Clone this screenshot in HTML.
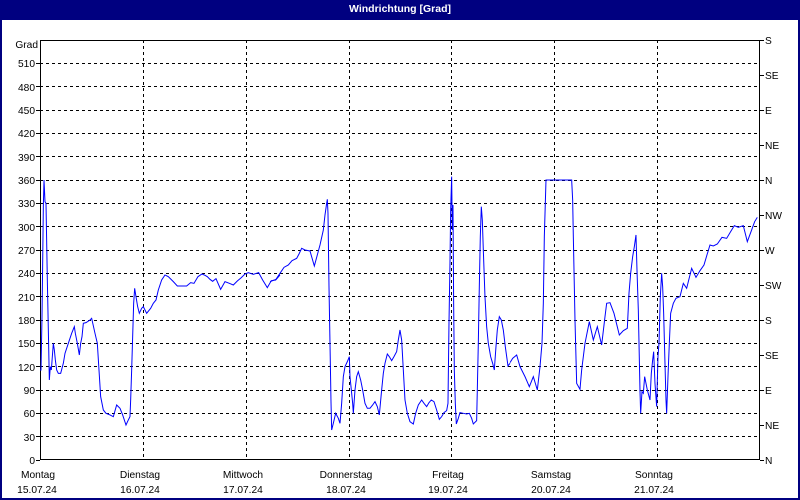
<!DOCTYPE html>
<html><head><meta charset="utf-8"><style>
html,body{margin:0;padding:0}
body{width:800px;height:500px;position:relative;background:#fff;font-family:Tahoma,"Liberation Sans",sans-serif;font-size:11px;color:#000;overflow:hidden}
.frame{position:absolute;left:0;top:0;width:796px;height:496px;border:2px solid #000080}
.title{position:absolute;left:0;top:0;width:800px;height:20px;background:#000080;color:#fff;font-weight:bold;text-align:center;line-height:18px;font-size:10.5px}
svg{position:absolute;left:0;top:0}
</style></head><body>
<div class="frame"></div>
<div class="title">Windrichtung [Grad]</div>
<svg width="800" height="500" font-family="Tahoma, 'Liberation Sans', sans-serif" font-size="10.2">
<g stroke="#000" stroke-width="1" stroke-dasharray="3,3" shape-rendering="crispEdges">
<line x1="40" x2="760" y1="436.5" y2="436.5"/><line x1="40" x2="760" y1="413.5" y2="413.5"/><line x1="40" x2="760" y1="390.5" y2="390.5"/><line x1="40" x2="760" y1="366.5" y2="366.5"/><line x1="40" x2="760" y1="343.5" y2="343.5"/><line x1="40" x2="760" y1="320.5" y2="320.5"/><line x1="40" x2="760" y1="296.5" y2="296.5"/><line x1="40" x2="760" y1="273.5" y2="273.5"/><line x1="40" x2="760" y1="250.5" y2="250.5"/><line x1="40" x2="760" y1="226.5" y2="226.5"/><line x1="40" x2="760" y1="203.5" y2="203.5"/><line x1="40" x2="760" y1="180.5" y2="180.5"/><line x1="40" x2="760" y1="156.5" y2="156.5"/><line x1="40" x2="760" y1="133.5" y2="133.5"/><line x1="40" x2="760" y1="110.5" y2="110.5"/><line x1="40" x2="760" y1="86.5" y2="86.5"/><line x1="40" x2="760" y1="63.5" y2="63.5"/>
<line y1="40" y2="460" x1="143.5" x2="143.5"/><line y1="40" y2="460" x1="246.5" x2="246.5"/><line y1="40" y2="460" x1="349.5" x2="349.5"/><line y1="40" y2="460" x1="451.5" x2="451.5"/><line y1="40" y2="460" x1="554.5" x2="554.5"/><line y1="40" y2="460" x1="657.5" x2="657.5"/>
</g>
<g stroke="#000" stroke-width="1" fill="none" shape-rendering="crispEdges">
<rect x="40.5" y="40.5" width="719" height="419"/>
<path d="M36 460.5h4M36 436.5h4M36 413.5h4M36 390.5h4M36 366.5h4M36 343.5h4M36 320.5h4M36 296.5h4M36 273.5h4M36 250.5h4M36 226.5h4M36 203.5h4M36 180.5h4M36 156.5h4M36 133.5h4M36 110.5h4M36 86.5h4M36 63.5h4"/>
<path d="M760 460.5h4M760 425.5h4M760 390.5h4M760 355.5h4M760 320.5h4M760 285.5h4M760 250.5h4M760 215.5h4M760 180.5h4M760 145.5h4M760 110.5h4M760 75.5h4M760 40.5h4"/>
</g>
<g text-anchor="end">
<text x="38" y="48">Grad</text>
<text x="35" y="464">0</text><text x="35" y="441">30</text><text x="35" y="417">60</text><text x="35" y="394">90</text><text x="35" y="371">120</text><text x="35" y="347">150</text><text x="35" y="324">180</text><text x="35" y="301">210</text><text x="35" y="277">240</text><text x="35" y="254">270</text><text x="35" y="231">300</text><text x="35" y="207">330</text><text x="35" y="184">360</text><text x="35" y="161">390</text><text x="35" y="137">420</text><text x="35" y="114">450</text><text x="35" y="91">480</text><text x="35" y="67">510</text>
</g>
<g>
<text x="765" y="464">N</text><text x="765" y="429">NE</text><text x="765" y="394">E</text><text x="765" y="359">SE</text><text x="765" y="324">S</text><text x="765" y="289">SW</text><text x="765" y="254">W</text><text x="765" y="219">NW</text><text x="765" y="184">N</text><text x="765" y="149">NE</text><text x="765" y="114">E</text><text x="765" y="79">SE</text><text x="765" y="44">S</text>
</g>
<g text-anchor="middle">
<text x="38" y="478">Montag</text><text x="37" y="493">15.07.24</text>
<text x="140" y="478">Dienstag</text><text x="140" y="493">16.07.24</text>
<text x="243" y="478">Mittwoch</text><text x="243" y="493">17.07.24</text>
<text x="346" y="478">Donnerstag</text><text x="346" y="493">18.07.24</text>
<text x="448" y="478">Freitag</text><text x="448" y="493">19.07.24</text>
<text x="551" y="478">Samstag</text><text x="551" y="493">20.07.24</text>
<text x="654" y="478">Sonntag</text><text x="654" y="493">21.07.24</text>
</g>
<g fill="none" stroke="#0000ff" stroke-width="1">
<polyline transform="translate(40,170) scale(0.3333)" vector-effect="non-scaling-stroke" points="0,600 3,600 6,440 8,280 10,110 12,30 15,95 18,100 22,330 25,480 28,630 31,590 34,600 37,560 40,520 43,540 46,570 50,600 55,610 62,610 70,580 75,550 85,520 95,490 103,470 106,490 112,520 118,555 122,520 126,500 130,460 138,458 150,450 155,445 165,490 172,520 177,600 182,680 190,720 198,730 210,735 220,740 230,705 240,715 248,735 258,765 265,750 270,740 272,690 275,600 278,500 281,400 284,355 288,380 293,410 298,430 305,415 310,410 320,430 332,415 340,400 348,390 355,360 365,330 375,315 385,320 400,335 412,348 440,348 452,338 462,340 474,320 486,312 495,316 502,320 510,328 518,334 528,326 542,358 555,335 568,340 580,345 592,333 604,323 615,312 625,308 640,313 656,308 668,330 682,353 694,332 707,330 720,315"/>
<polyline transform="translate(270,170) scale(0.3333)" vector-effect="non-scaling-stroke" points="0,335 18,328 30,310 42,292 55,285 66,272 80,265 87,252 95,235 105,240 120,243 133,288 140,262 150,225 160,180 165,135 170,100 172,88 174,130 177,350 180,520 183,695 185,780 190,760 197,730 205,745 210,760 215,700 220,620 225,590 232,575 238,560 240,620 244,660 248,700 250,730 255,660 260,620 265,605 272,630 278,660 285,700 292,715 300,715 308,705 315,695 322,710 328,735 335,660 340,610 345,580 352,552 358,560 365,572 372,560 380,545 385,510 390,480 395,510 400,600 405,690 412,730 420,755 430,762 437,730 445,705 455,690 462,700 470,710 477,698 484,690 492,695 500,720 508,748 515,740 522,728 530,722 534,700 537,460 540,280 542,120 545,20 547,180 549,105 551,400 553,600 556,700 559,762 565,745 570,728 580,730 590,732 598,730 605,745 610,762 620,752 625,520 628,350 631,200 634,110 637,150 640,240 645,380 650,470 655,520 662,560 668,580 673,600 678,530 682,480 688,440 694,450 700,480 706,530 714,588 720,580"/>
<polyline transform="translate(510,170) scale(0.3333)" vector-effect="non-scaling-stroke" points="0,578 8,565 20,555 30,590 45,620 58,650 70,620 82,660 90,590 96,520 100,400 103,200 108,30 185,30 188,90 190,200 195,450 200,640 210,658 215,600 225,520 238,455 250,510 262,470 275,525 285,440 290,400 300,398 312,430 328,495 340,482 352,475 357,370 362,310 368,260 373,230 378,195 381,300 385,420 390,662 392,730 396,665 400,670 404,620 412,660 420,690 424,610 428,570 431,545 435,640 440,710 444,560 447,520 451,380 455,310 458,350 461,430 465,580 468,690 470,730 474,620 478,520 482,430 490,400 498,385 510,380 520,340 530,355 545,295 558,322 570,302 582,285 590,258 600,225 610,228 622,222 636,202 650,205 662,185 673,167 685,172 700,167 712,215 722,188 734,155 742,142"/>
</g>
</svg>
</body></html>
